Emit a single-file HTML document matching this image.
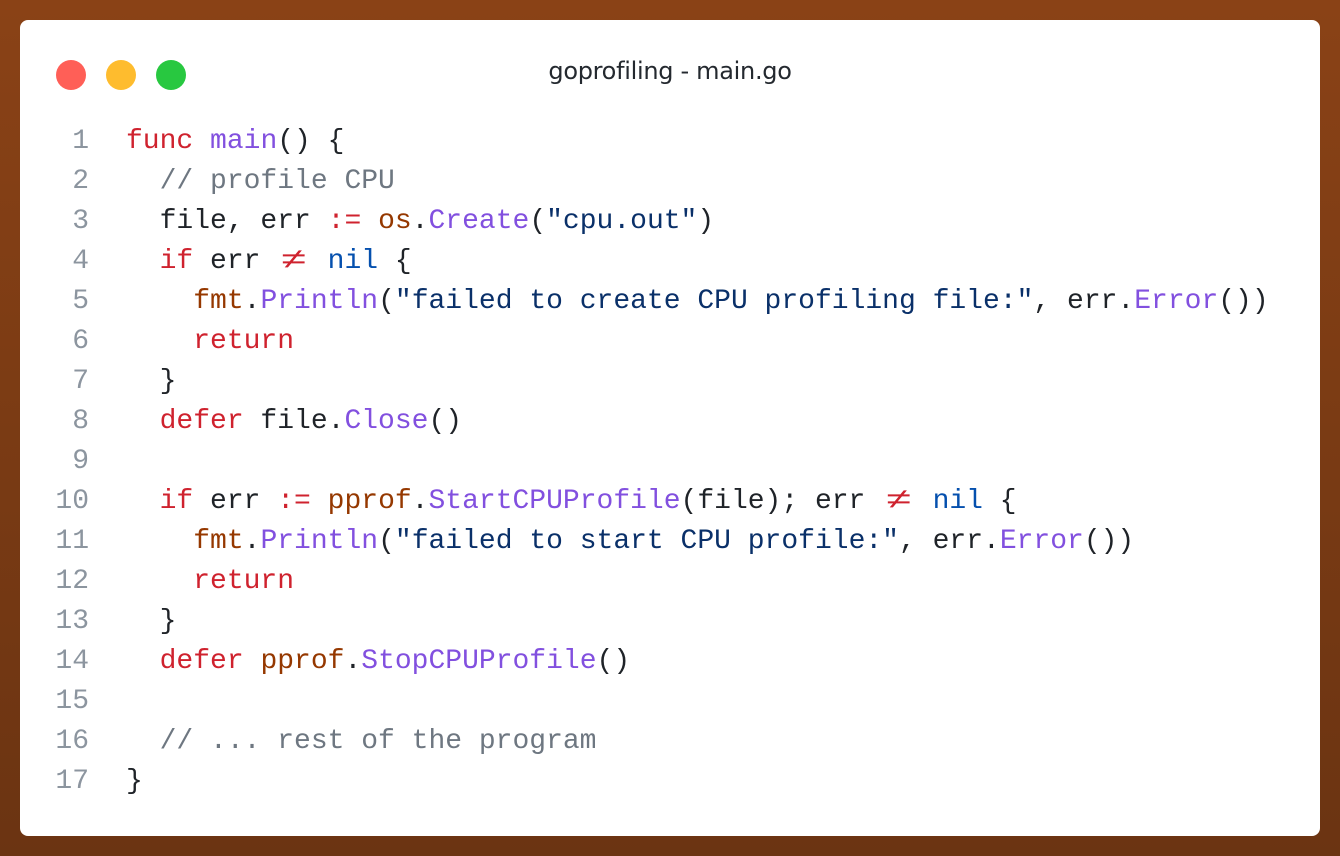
<!DOCTYPE html>
<html><head><style>
html,body{margin:0;padding:0}
body{width:1340px;height:856px;background:linear-gradient(180deg,#8a4216,#6b3412);position:relative;overflow:hidden}
.win{position:absolute;left:20px;top:20px;width:1300px;height:816px;background:#fff;border-radius:8px}
.dot{position:absolute;top:40px;width:30px;height:30px;border-radius:50%}
.title{position:absolute;left:0;right:0;top:37px;text-align:center;font:24px "DejaVu Sans","Liberation Sans",sans-serif;color:#24292f;letter-spacing:-0.3px}
pre{position:absolute;left:0;top:102px;margin:0;font:28px/40px "Liberation Mono",monospace;color:#1f2328}
.ln{display:inline-block;width:69px;text-align:right;color:#8c959f;margin-right:37px}
.k{color:#cf222e}.f{color:#8250df}.p{color:#953800}.s{color:#0a3069}.n{color:#0550ae}.c{color:#6e7781}
.ne{display:inline-block;width:2ch;text-align:center;color:#cf222e;transform:scaleX(1.6)}
</style></head><body>
<div class="win">
<div class="dot" style="left:36px;background:#ff5f57"></div>
<div class="dot" style="left:86px;background:#febc2e"></div>
<div class="dot" style="left:136px;background:#28c840"></div>
<div class="title">goprofiling - main.go</div>
<pre><span class="ln">1</span><span class="k">func</span> <span class="f">main</span>() {
<span class="ln">2</span>  <span class="c">// profile CPU</span>
<span class="ln">3</span>  file, err <span class="k">:=</span> <span class="p">os</span>.<span class="f">Create</span>(<span class="s">"cpu.out"</span>)
<span class="ln">4</span>  <span class="k">if</span> err <span class="ne">≠</span> <span class="n">nil</span> {
<span class="ln">5</span>    <span class="p">fmt</span>.<span class="f">Println</span>(<span class="s">"failed to create CPU profiling file:"</span>, err.<span class="f">Error</span>())
<span class="ln">6</span>    <span class="k">return</span>
<span class="ln">7</span>  }
<span class="ln">8</span>  <span class="k">defer</span> file.<span class="f">Close</span>()
<span class="ln">9</span>
<span class="ln">10</span>  <span class="k">if</span> err <span class="k">:=</span> <span class="p">pprof</span>.<span class="f">StartCPUProfile</span>(file); err <span class="ne">≠</span> <span class="n">nil</span> {
<span class="ln">11</span>    <span class="p">fmt</span>.<span class="f">Println</span>(<span class="s">"failed to start CPU profile:"</span>, err.<span class="f">Error</span>())
<span class="ln">12</span>    <span class="k">return</span>
<span class="ln">13</span>  }
<span class="ln">14</span>  <span class="k">defer</span> <span class="p">pprof</span>.<span class="f">StopCPUProfile</span>()
<span class="ln">15</span>
<span class="ln">16</span>  <span class="c">// ... rest of the program</span>
<span class="ln">17</span>}</pre>
</div>
</body></html>
